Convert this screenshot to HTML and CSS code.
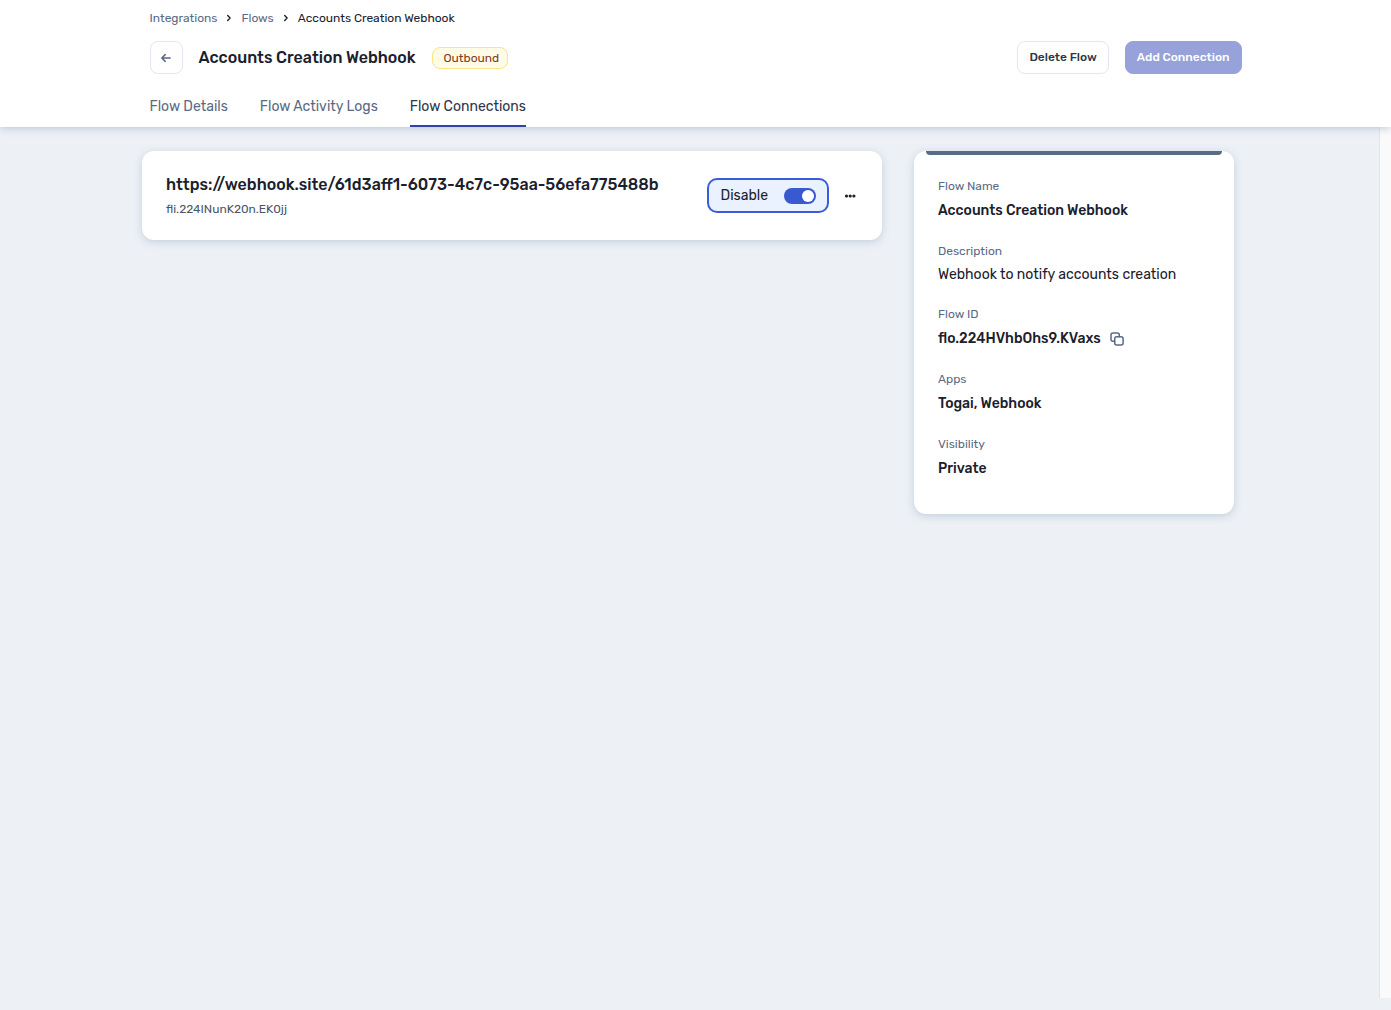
FILE: index.html
```html
<!DOCTYPE html>
<html lang="en">
<head>
  <meta charset="utf-8">
  <meta name="viewport" content="width=device-width, initial-scale=1">
  <title>Accounts Creation Webhook</title>
  <link rel="stylesheet" href="styles.css">
</head>
<body>
  <header class="header">
    <div class="container">
      <nav class="breadcrumb" aria-label="Breadcrumb">
        <a href="#">Integrations</a>
        <svg class="chevron" viewBox="0 0 8 8" aria-hidden="true"><path d="M2.7 1.6 5.1 4 2.7 6.4"/></svg>
        <a href="#">Flows</a>
        <svg class="chevron" viewBox="0 0 8 8" aria-hidden="true"><path d="M2.7 1.6 5.1 4 2.7 6.4"/></svg>
        <span class="current">Accounts Creation Webhook</span>
      </nav>
      <div class="title-row">
        <button class="back" type="button" aria-label="Back">
          <svg viewBox="0 0 12 12" aria-hidden="true"><path d="M10.2 6H2M5.2 2.6 1.8 6l3.4 3.4"/></svg>
        </button>
        <h1 class="title">Accounts Creation Webhook</h1>
        <span class="badge">Outbound</span>
        <div class="actions">
          <button class="button" type="button">Delete Flow</button>
          <button class="button primary" type="button" disabled>Add Connection</button>
        </div>
      </div>
      <nav class="tabs" aria-label="Flow sections">
        <a class="tab" href="#">Flow Details</a>
        <a class="tab" href="#">Flow Activity Logs</a>
        <a class="tab active" href="#" aria-current="page">Flow Connections</a>
      </nav>
    </div>
  </header>
  <div class="body">
    <main class="content">
      <section class="card connection">
        <div class="endpoint">
          <h2 class="url">https://webhook.site/61d3aff1-6073-4c7c-95aa-56efa775488b</h2>
          <p class="connection-id">fli.224INunK20n.EK0jj</p>
        </div>
        <label class="toggle">
          Disable
          <input class="switch" type="checkbox" role="switch" checked>
        </label>
        <button class="more" type="button" aria-label="More options">
          <svg viewBox="0 0 12 4" aria-hidden="true"><circle cx="2.5" cy="2" r="1.6"/><circle cx="6.2" cy="2" r="1.6"/><circle cx="9.9" cy="2" r="1.6"/></svg>
        </button>
      </section>
      <aside class="card summary">
        <dl class="fields">
          <div class="field"><dt>Flow Name</dt><dd>Accounts Creation Webhook</dd></div>
          <div class="field"><dt>Description</dt><dd class="plain">Webhook to notify accounts creation</dd></div>
          <div class="field">
            <dt>Flow ID</dt>
            <dd>flo.224HVhbOhs9.KVaxs
              <button class="copy" type="button" aria-label="Copy flow ID">
                <svg viewBox="0 0 14 14" aria-hidden="true"><rect x="4.7" y="4.7" width="8.4" height="8.4" rx="2"/><path d="M4.7 9.3H3a2 2 0 0 1-2-2V3a2 2 0 0 1 2-2h4.3a2 2 0 0 1 2 2v1.7"/></svg>
              </button>
            </dd>
          </div>
          <div class="field"><dt>Apps</dt><dd>Togai, Webhook</dd></div>
          <div class="field"><dt>Visibility</dt><dd>Private</dd></div>
        </dl>
      </aside>
    </main>
    <div class="gutter"></div>
  </div>
</body>
</html>
```
FILE: styles.css
```css
* {
  box-sizing: border-box;
}

body {
  display: flex;
  flex-direction: column;
  min-height: 100vh;
  margin: 0;
  background: #edf1f6;
  color: #1a202c;
  font-family: Rubik, Roboto, sans-serif;
  font-size: 14px;
}

h1, h2, p, dl, dd {
  margin: 0;
}

a {
  color: inherit;
  text-decoration: none;
}

button {
  font: inherit;
  cursor: pointer;
}

svg {
  display: block;
  fill: none;
  stroke: currentColor;
  stroke-linecap: round;
  stroke-linejoin: round;
}

.header {
  position: relative;
  background: #fff;
  box-shadow: 0 1px 8px rgba(100, 125, 165, 0.4);
}

.container {
  max-width: 1092px;
  margin: 0 auto;
}

.breadcrumb {
  display: flex;
  align-items: center;
  gap: 8px;
  padding-top: 10px;
  color: #5a6a85;
  font-size: 12px;
  line-height: 16px;
}

.chevron {
  width: 8px;
  height: 8px;
  color: #1a202c;
  stroke-width: 1.4;
}

.current {
  color: #1a202c;
}

.title-row {
  display: flex;
  align-items: center;
  gap: 16px;
  margin-top: 15px;
}

.back {
  display: grid;
  place-items: center;
  width: 33px;
  height: 33px;
  padding: 0;
  border: 1px solid #e2e8f0;
  border-radius: 8px;
  background: #fff;
  color: #5a6a85;
}

.back svg {
  width: 12px;
  height: 12px;
  stroke-width: 1.5;
}

.title {
  font-size: 16px;
  font-weight: 500;
  line-height: 24px;
}

.badge {
  padding: 0 8px 0 11px;
  border: 1px solid #fae588;
  border-radius: 8px;
  background: #fffbe6;
  color: #833b1a;
  font-size: 12px;
  line-height: 20px;
}

.actions {
  display: flex;
  gap: 16px;
  margin-left: auto;
}

.button {
  height: 33px;
  padding: 0 11px 2px;
  border: 1px solid #e2e8f0;
  border-radius: 8px;
  background: #fff;
  color: #2d3748;
  font-size: 12px;
  font-weight: 500;
}

.primary {
  border-color: #98a2da;
  background: #98a2da;
  color: #fff;
  cursor: not-allowed;
}

.tabs {
  display: flex;
  gap: 32px;
  margin-top: 20px;
}

.tab {
  padding: 3px 0 8px;
  border-bottom: 2px solid transparent;
  color: #5a6a85;
  line-height: 20px;
}

.active {
  border-color: #3042ae;
  color: #2d3748;
}

.body {
  display: flex;
  flex: 1;
  gap: 3px;
}

.content {
  display: grid;
  flex: 1;
  grid-template-columns: minmax(0, 740px) 320px;
  align-items: start;
  justify-content: center;
  gap: 32px;
  padding: 24px 0;
}

.gutter {
  width: 12px;
  margin-bottom: 12px;
  border-left: 1px solid #e2e4e8;
  background: #fafafa;
}

.card {
  border-radius: 12px;
  background: #fff;
  box-shadow: 0 2px 8px rgba(100, 125, 165, 0.3);
}

.connection {
  display: flex;
  align-items: center;
  padding: 22px 24px;
}

.endpoint {
  flex: 1;
  min-width: 0;
}

.url {
  font-size: 16px;
  font-weight: 500;
  line-height: 24px;
  overflow-wrap: anywhere;
}

.connection-id {
  margin-top: 3px;
  color: #4a5568;
  font-size: 12px;
  line-height: 18px;
}

.toggle {
  display: flex;
  align-items: center;
  gap: 16px;
  height: 35px;
  padding: 0 11px 0 12px;
  border: 2px solid #3b5bdb;
  border-radius: 10px;
  background: #ebf2ff;
}

.switch {
  display: flex;
  align-items: center;
  justify-content: flex-end;
  width: 32px;
  height: 16px;
  margin: 0;
  padding: 2px;
  border-radius: 8px;
  appearance: none;
  background: #3859d0;
}

.switch::before {
  width: 12px;
  height: 12px;
  border-radius: 50%;
  background: #fff;
  content: "";
}

.switch:not(:checked) {
  justify-content: flex-start;
  background: #a0aec0;
}

.more {
  margin: 0 2px 0 15px;
  padding: 0;
  border: 0;
  background: none;
  color: #1a202c;
}

.more svg {
  width: 12px;
  height: 4px;
  fill: currentColor;
  stroke: none;
}

.summary {
  padding: 0 12px 33px;
}

.summary::before {
  display: block;
  height: 4px;
  border-radius: 0 0 4px 4px;
  background: #5a6a85;
  content: "";
}

.fields {
  display: grid;
  gap: 20px;
  padding: 23px 12px 0;
}

.field {
  display: grid;
  gap: 5px;
}

dt {
  color: #5a6a85;
  font-size: 12px;
  line-height: 16px;
}

dd {
  display: flex;
  align-items: center;
  gap: 9px;
  font-weight: 500;
  line-height: 24px;
}

.plain {
  font-weight: 400;
  line-height: 22px;
}

.copy {
  padding: 0;
  border: 0;
  background: none;
  color: #5a6a85;
}

.copy svg {
  width: 14px;
  height: 14px;
  stroke-width: 1.5;
}
```
